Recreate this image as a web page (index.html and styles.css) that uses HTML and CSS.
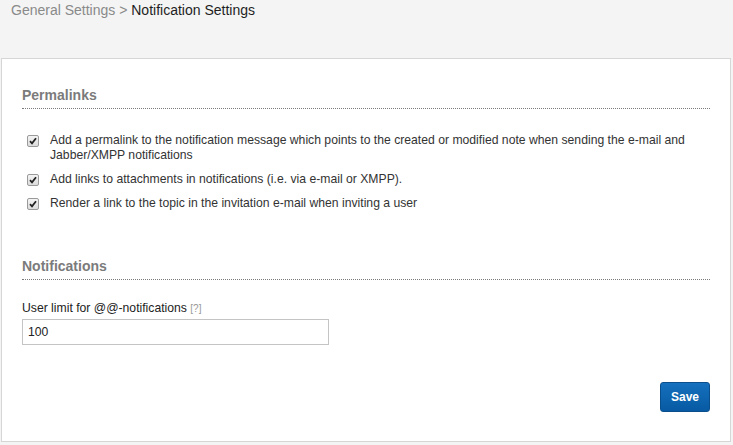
FILE: index.html
```html
<!DOCTYPE html>
<html>
<head>
<meta charset="utf-8">
<link rel="stylesheet" href="styles.css">
</head>
<body>
<div class="breadcrumb"><span class="crumb-parent">General Settings &gt; </span><span class="crumb-current">Notification Settings</span></div>
<div class="panel">
  <h2 class="section-title">Permalinks</h2>
  <ul class="checks">
    <li class="check-item">
      <span class="cb"><svg width="8" height="8" viewBox="0 0 8 8"><path d="M1 4.2 L3 6.3 L7 1.3" fill="none" stroke="#222" stroke-width="1.8"/></svg></span>
      <span class="check-text">Add a permalink to the notification message which points to the created or modified note when sending the e-mail and Jabber/XMPP notifications</span>
    </li>
    <li class="check-item">
      <span class="cb"><svg width="8" height="8" viewBox="0 0 8 8"><path d="M1 4.2 L3 6.3 L7 1.3" fill="none" stroke="#222" stroke-width="1.8"/></svg></span>
      <span class="check-text">Add links to attachments in notifications (i.e. via e-mail or XMPP).</span>
    </li>
    <li class="check-item">
      <span class="cb"><svg width="8" height="8" viewBox="0 0 8 8"><path d="M1 4.2 L3 6.3 L7 1.3" fill="none" stroke="#222" stroke-width="1.8"/></svg></span>
      <span class="check-text">Render a link to the topic in the invitation e-mail when inviting a user</span>
    </li>
  </ul>
  <h2 class="section-title section-gap">Notifications</h2>
  <div class="field-label">User limit for @@-notifications <span class="help">[?]</span></div>
  <div class="input-box">100</div>
  <div class="actions"><button class="btn-save">Save</button></div>
</div>
</body>
</html>
```
FILE: styles.css
```css
html, body {
  margin: 0;
  padding: 0;
}
body {
  background: #f4f4f4;
  font-family: "Liberation Sans", Arial, sans-serif;
  width: 733px;
  height: 445px;
  overflow: hidden;
}
.breadcrumb {
  font-size: 14px;
  line-height: 16px;
  padding: 2px 0 0 11px;
  height: 40px;
}
.crumb-parent { color: #8a8a8a; }
.crumb-current { color: #1e1e1e; }
.panel {
  margin: 16px 2px 0 1px;
  background: #fff;
  border: 1px solid #d6d6d6;
  padding: 28px 20px 28px 20px;
  height: 326px;
}
.section-title {
  margin: 0;
  font-size: 14px;
  line-height: 16px;
  font-weight: bold;
  color: #7b7b7b;
  padding-bottom: 5px;
  border-bottom: 1px dotted #7a7a7a;
}
.section-gap {
  margin-top: 47px;
}
.checks {
  list-style: none;
  margin: 24px 0 0 0;
  padding: 0;
}
.check-item {
  display: flex;
  align-items: flex-start;
  font-size: 12.2px;
  line-height: 15px;
  color: #333;
  margin-bottom: 9px;
}
.cb {
  flex: none;
  width: 10px;
  height: 10px;
  margin: 2px 11px 0 5px;
  border: 1px solid #9a9a9a;
  border-radius: 2px;
  background: linear-gradient(#f4f4f4, #dcdcdc);
  display: flex;
  align-items: center;
  justify-content: center;
}
.cb svg { display: block; }
.field-label {
  margin-top: 21px;
  font-size: 12.2px;
  line-height: 15px;
  color: #222;
}
.help {
  font-size: 10px;
  color: #999;
}
.input-box {
  margin-top: 3px;
  width: 295px;
  height: 24px;
  border: 1px solid #c4c4c4;
  padding: 0 5px;
  font-size: 12.2px;
  line-height: 24px;
  color: #222;
}
.actions {
  display: flex;
  justify-content: flex-end;
  margin-top: 37px;
}
.btn-save {
  width: 50px;
  height: 30px;
  border: 1px solid #0a4f8c;
  border-radius: 3px;
  background: linear-gradient(#1570bd, #075aa3);
  color: #fff;
  font-family: "Liberation Sans", Arial, sans-serif;
  font-weight: bold;
  font-size: 12px;
  padding: 0;
}
```
